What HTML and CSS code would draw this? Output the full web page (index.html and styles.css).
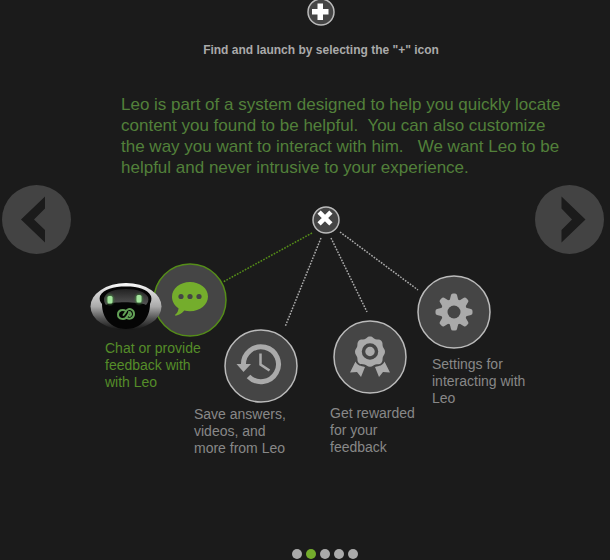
FILE: index.html
```html
<!DOCTYPE html>
<html lang="en">
<head>
<meta charset="utf-8">
<title>Meet Leo</title>
<link rel="stylesheet" href="styles.css">
</head>
<body>
<header class="top">
  <button class="round" type="button" aria-label="Open">
    <svg viewBox="0 0 28 28" width="28" height="28"><circle cx="14" cy="14" r="13" class="disc"/><path d="M10.500 5.500h5.500v5.500h5.500v5.500H16V22h-5.500v-5.500H5V11h5.500z" fill="#fff"/></svg>
  </button>
  <h1 class="title">Find and launch by selecting the "+" icon</h1>
</header>
<main class="slide">
  <p class="intro">Leo is part of a system designed to help you quickly locate<br>content you found to be helpful.&nbsp; You can also customize<br>the way you want to interact with him.&nbsp;&nbsp; We want Leo to be<br>helpful and never intrusive to your experience.</p>
  <button class="arrow" type="button" aria-label="Previous">
    <svg viewBox="0 0 70 70" width="70" height="70"><circle cx="34.500" cy="35.500" r="34.500" fill="#434343"/><path d="M43 12.500V24.500L32 35.500 43 46V58.500L19 35.500z" fill="#1b1b1b"/></svg>
  </button>
  <section class="diagram" aria-label="Leo menu">
    <svg class="links" viewBox="0 0 462 280" width="462" height="280" fill="none" stroke-width="1.500" stroke-dasharray="1.700 1.300">
      <path d="M240 49L151 98" stroke="#558d19"/>
      <path d="M249 54L213 143M259 54L295 128M268 48L346 106" stroke="#aaa"/>
    </svg>
    <button class="round close" type="button" aria-label="Close">
      <svg viewBox="0 0 28 28" width="28" height="28"><circle cx="14" cy="14" r="13" class="disc"/><path d="M8.700 7.700L17.300 16.300M17.300 7.700L8.700 16.300" stroke="#fff" stroke-width="4.600" stroke-linecap="square"/></svg>
    </button>
    <button class="node chat" type="button">
      <svg class="icon" viewBox="0 0 74 74" width="74" height="74"><circle cx="37" cy="37" r="36" class="disc active"/><path d="M37 19c10 0 18 6.400 18 14.500S47 48.300 37 48.300c-2 0-4-.2-5.700-.7-2.500 3-5.300 4.700-8.600 5.100-.7 0-.8-.8-.3-1.200 2-1.700 3-3.800 3.100-6.300C21.500 42.500 19 38.500 19 33.700 19 25.500 27 19 37 19z" fill="#74ad2c"/><g fill="#454545"><circle cx="28" cy="33.500" r="2.600"/><circle cx="37" cy="33.500" r="2.600"/><circle cx="46" cy="33.500" r="2.600"/></g></svg>
      <svg class="robot" viewBox="0 0 72 48" width="72" height="48">
        <defs>
          <linearGradient id="shell" x1="0" y1="0" x2="0" y2="1"><stop offset="0" stop-color="#fff"/><stop offset=".15" stop-color="#ddd"/><stop offset=".5" stop-color="#aaa"/><stop offset=".75" stop-color="#555"/><stop offset="1" stop-color="#151515"/></linearGradient>
          <linearGradient id="visor" x1="0" y1="0" x2="0" y2="1"><stop offset="0" stop-color="#222"/><stop offset="1" stop-color="#555"/></linearGradient>
          <radialGradient id="glow"><stop offset="0" stop-color="#75c66b"/><stop offset=".5" stop-color="#4b8a45" stop-opacity=".7"/><stop offset="1" stop-color="#3d6a39" stop-opacity="0"/></radialGradient>
        </defs>
        <ellipse cx="36" cy="23.500" rx="35.500" ry="23.500" fill="url(#shell)"/>
        <path d="M10 13C14 6 23 3.500 36 3.500S57 6 61 13c1 3 0 6-1 8 0 14-9 25-24 25S12 35 12 21c-2-2-3-5-2-8z" fill="#050505"/>
        <path d="M14 15C16 9 24 6 36 6s19 3 22 8c1 3 0 6-2 8-6-3-33-4-40 0-2-2-2-5-2-7z" fill="url(#visor)"/>
        <ellipse cx="20" cy="16.500" rx="5.500" ry="7" fill="url(#glow)"/><ellipse cx="49" cy="16" rx="5.500" ry="7" fill="url(#glow)"/>
        <rect x="17.500" y="13" width="5" height="7.500" rx="1.500" fill="#a5e59e"/><rect x="46.500" y="12" width="5" height="7.500" rx="1.500" fill="#a5e59e"/>
        <path d="M36 28c-3-2-8-1-8 3.500 0 5 7 6 9 2l2.500-4M36 28.500l-2.500 3.500M36 34.500c3 2.500 8 1 8-3.500s-4-6-7-4M39 29c2 0 3 3 .5 4" fill="none" stroke="#63a157" stroke-width="2" stroke-linecap="round"/>
      </svg>
      <span class="caption">Chat or provide<br>feedback with<br>with Leo</span>
    </button>
    <button class="node save" type="button">
      <svg class="icon" viewBox="0 0 74 74" width="74" height="74"><circle cx="37" cy="37" r="36" class="disc"/><path d="M19.500 36A17.500 17.500 0 1 1 24.500 47.500" fill="none" stroke="#aaa" stroke-width="5"/><path d="M12.500 35H27L19.500 43z" fill="#aaa"/><path d="M36.500 24.500v11l9 6" fill="none" stroke="#aaa" stroke-width="2.500"/></svg>
      <span class="caption">Save answers,<br>videos, and<br>more from Leo</span>
    </button>
    <button class="node reward" type="button">
      <svg class="icon" viewBox="0 0 74 74" width="74" height="74"><circle cx="37" cy="37" r="36" class="disc"/><g fill="#aaa"><path d="M37 16.500c3 0 3.500 2.200 5.500 2.800s4-.3 5.800 1.500.9 3.800 1.500 5.800 2.200 2.700 2.200 5.200-1.700 3.500-2.200 5.500.2 4-1.500 5.700-3.800 1-5.800 1.600-2.800 2.200-5.500 2.200-3.500-1.600-5.500-2.200-4 .1-5.800-1.600-.9-3.700-1.500-5.700-2.200-3-2.200-5.500 1.700-3.200 2.200-5.200-.2-4 1.500-5.800 3.800-.9 5.800-1.500 2.500-2.800 5.500-2.800z"/><path d="M22.500 41.500c2 4.500 5 4 9.500 5.500L28 57l-4-5-7 .5z"/><path d="M51.500 41.500c-2 4.500-5 4-9.500 5.500L46 57l4-5 7 .5z"/></g><circle cx="37" cy="31.500" r="6.500" fill="#aaa" stroke="#454545" stroke-width="3.500"/></svg>
      <span class="caption">Get rewarded<br>for your<br>feedback</span>
    </button>
    <button class="node settings" type="button">
      <svg class="icon" viewBox="0 0 74 74" width="74" height="74"><circle cx="37" cy="37" r="36" class="disc"/><g fill="#aaa"><circle cx="37" cy="37" r="13"/><g id="teeth"><path id="tooth" d="M32.500 26L34 20Q34.300 18.500 36 18.500h2q1.700 0 2 1.500l1.500 6v22L40 54q-.3 1.500-2 1.500h-2q-1.700 0-2-1.500l-1.500-6z"/><use href="#tooth" transform="rotate(90 37 37)"/></g><use href="#teeth" transform="rotate(45 37 37)"/></g><circle cx="37" cy="37" r="6.500" fill="#454545"/></svg>
      <span class="caption">Settings for<br>interacting with<br>Leo</span>
    </button>
  </section>
  <button class="arrow" type="button" aria-label="Next">
    <svg viewBox="0 0 70 70" width="70" height="70"><circle cx="34.500" cy="35.500" r="34.500" fill="#434343"/><path d="M26.500 12.500V24.500L37 35.500 26.500 46V58.500L50.500 35.500z" fill="#1b1b1b"/></svg>
  </button>
</main>
<nav class="dots" aria-label="Slides">
  <button class="dot" type="button" aria-label="Slide 1"></button>
  <button class="dot current" type="button" aria-label="Slide 2"></button>
  <button class="dot" type="button" aria-label="Slide 3"></button>
  <button class="dot" type="button" aria-label="Slide 4"></button>
  <button class="dot" type="button" aria-label="Slide 5"></button>
</nav>
</body>
</html>
```
FILE: styles.css
```css
* { box-sizing: border-box; }

body {
  margin: 0;
  min-height: 100vh;
  display: flex;
  flex-direction: column;
  background: #1b1b1b;
  color: #aaa;
  font-family: "Liberation Sans", Arial, sans-serif;
}

button {
  padding: 0;
  border: 0;
  background: none;
  color: inherit;
  font: inherit;
  text-align: left;
  cursor: pointer;
}

svg { display: block; }

.disc { fill: #454545; stroke: #bbb; stroke-width: 1.5; }
.disc.active { stroke: #558d19; }

.top {
  display: flex;
  flex-direction: column;
  align-items: center;
  gap: 16px;
  padding-left: 32px;
  margin-top: -2px;
}

.title {
  margin: 0;
  font-size: 12px;
  line-height: 16px;
  font-weight: bold;
}

.slide {
  flex: 1;
  display: grid;
  grid-template-columns: 70px 1fr 70px;
  grid-template-rows: auto 1fr;
  row-gap: 6px;
  align-items: start;
  padding: 36px 5px 0 2px;
}

.intro {
  grid-column: 1 / -1;
  margin: 0;
  padding-left: 119px;
  color: #52803a;
  font-size: 17px;
  line-height: 21px;
  white-space: nowrap;
}

.diagram {
  position: relative;
  justify-self: start;
  width: 462px;
  height: 280px;
}

.links { position: absolute; inset: 0; }

.close { position: absolute; left: 240px; top: 22px; }

.node {
  position: absolute;
  display: flex;
  flex-direction: column;
  gap: 3px;
}

.chat { left: 18px; top: 79px; color: #558d29; }
.chat .icon { margin-left: 63px; }
.chat .caption { padding-left: 15px; }
.robot { position: absolute; left: 0; top: 20px; }

.save { left: 122px; top: 145px; color: #888; }
.save .icon { margin-left: 30px; }

.reward { left: 258px; top: 136px; gap: 11px; color: #888; }
.reward .icon { margin-left: 3px; }

.settings { left: 345px; top: 91px; gap: 7px; color: #888; }
.settings .caption { padding-left: 15px; }

.caption {
  font-size: 14px;
  line-height: 17px;
  white-space: nowrap;
}

.dots {
  display: flex;
  justify-content: center;
  gap: 4px;
  padding: 0 0 1px 39px;
}

.dot {
  width: 10px;
  height: 10px;
  border-radius: 50%;
  background: #aaa;
}

.dot.current { background: #74ad2c; }
```
